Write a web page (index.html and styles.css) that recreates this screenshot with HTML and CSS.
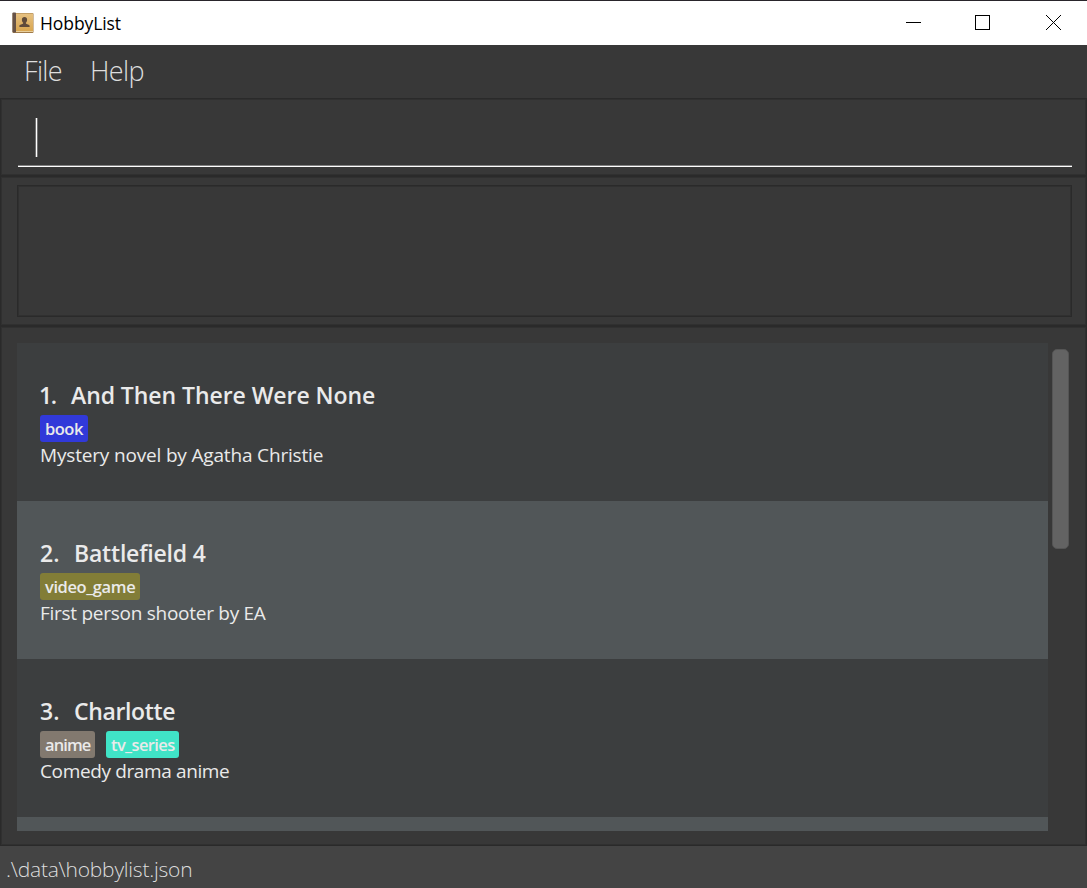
FILE: index.html
```html
<!DOCTYPE html>
<html lang="en">
<head>
<meta charset="utf-8">
<title>HobbyList</title>
<link rel="stylesheet" href="styles.css">
</head>
<body>
<div class="window">
  <header class="titlebar">
    <svg class="app-icon" width="22" height="22" viewBox="0 0 22 22">
      <defs>
        <linearGradient id="cover" x1="0" y1="0" x2="0" y2="1">
          <stop offset="0" stop-color="#e6c182"/>
          <stop offset="1" stop-color="#d9a650"/>
        </linearGradient>
      </defs>
      <rect x="0.5" y="1" width="21" height="20" rx="1" fill="#a07a48"/>
      <rect x="4" y="1.5" width="17" height="17.5" fill="url(#cover)"/>
      <rect x="0.5" y="0.5" width="3.5" height="20" rx="0.8" fill="#665247"/>
      <rect x="4" y="19" width="17" height="1" fill="#e8cf9c"/>
      <path d="M12.5 5c1.7 0 2.6 1.1 2.6 2.7 0 1.3-.5 2.3-1.2 2.9v1c.5.7 3.7 1 3.7 2.3V15H7.400v-1.100c0-1.300 3.200-1.600 3.700-2.300v-1c-.7-.6-1.200-1.600-1.200-2.900C9.900 6.100 10.800 5 12.500 5z" fill="#5f4a3a"/>
    </svg>
    <span class="app-title">HobbyList</span>
    <svg class="controls" width="157" height="16" viewBox="0 0 157 16" fill="none" stroke="#000" shape-rendering="crispEdges">
      <path d="M0 7.500h15"/>
      <rect x="69.500" y="0.500" width="14" height="14"/>
      <path d="M140 0l15 15M155 0l-15 15" shape-rendering="auto"/>
    </svg>
  </header>
  <nav class="menubar"><span class="menu file">File</span><span class="menu help">Help</span></nav>
  <section class="panel command"><div class="field"><span class="caret"></span></div></section>
  <section class="panel result"><div class="result-box"></div></section>
  <main class="panel content">
    <div class="list">
      <article class="card">
        <h2 class="name"><span class="index first">1.</span><span class="n1">And Then There Were None</span></h2>
        <div class="tags"><span class="tag book">book</span></div>
        <p class="desc d1">Mystery novel by Agatha Christie</p>
      </article>
      <article class="card alt">
        <h2 class="name"><span class="index">2.</span><span class="n2">Battlefield 4</span></h2>
        <div class="tags"><span class="tag game">video_game</span></div>
        <p class="desc d2">First person shooter by EA</p>
      </article>
      <article class="card">
        <h2 class="name"><span class="index">3.</span><span class="n3">Charlotte</span></h2>
        <div class="tags"><span class="tag anime">anime</span><span class="tag series">tv_series</span></div>
        <p class="desc d3">Comedy drama anime</p>
      </article>
      <article class="card alt"></article>
    </div>
    <div class="scrollbar"><div class="thumb"></div></div>
  </main>
  <footer class="status"><span class="path">.\data\hobbylist.json</span></footer>
</div>
</body>
</html>
```
FILE: styles.css
```css
* { box-sizing: border-box; }
body { margin: 0; font-family: "Open Sans", "Noto Sans", sans-serif; }
.window { width: 1087px; height: 888px; display: flex; flex-direction: column; background: #383838; overflow: hidden; }
.titlebar { height: 45px; flex: none; border-top: 1px solid #29252b; background: #fff; display: flex; align-items: center; padding: 0 24px 0 12px; }
.app-icon { flex: none; margin-top: -1px; }
.app-title { margin-left: 6px; font-size: 17.500px; line-height: 24px; color: #000; letter-spacing: -0.080px; }
.controls { margin-left: auto; }
.menubar { height: 53px; flex: none; display: flex; padding-left: 24px; color: #dedede; font-size: 27px; line-height: 52px; font-weight: 300; }
.menu { white-space: nowrap; letter-spacing: -0.650px; }
.file { width: 66px; }
.panel { flex: none; border: 1px solid #2a2a2a; box-shadow: inset 0 0 0 1px #303030; }
.command { height: 78px; padding: 18px 14px 0 17px; }
.field { height: 50px; border-bottom: 1px solid #fff; box-shadow: inset 0 -1px #808080; padding: 1px 0 0 17px; }
.caret { display: block; width: 3px; height: 39px; background: #fff; border: solid #727272; border-width: 0 1px; }
.result { height: 150px; padding: 8px 14px 8px 16px; }
.result-box { height: 132px; border: 1px solid #2a2a2a; box-shadow: inset 0 0 0 1px #303030; }
.content { height: 520px; padding: 16px 17px 14px 16px; display: flex; gap: 4px; }
.list { width: 1031px; height: 488px; overflow: hidden; }
.card { height: 158px; background: #3c3e3f; padding: 36px 23px 0; color: #eaeaea; }
.alt { background: #515658; }
.name { margin: 0; font-size: 23px; line-height: 32px; height: 36px; font-weight: 600; display: flex; white-space: nowrap; }
.index { width: 34px; }
.first { width: 31px; letter-spacing: -1.500px; text-indent: -1px; }
.n1 { letter-spacing: -0.060px; }
.n2 { letter-spacing: -0.200px; }
.n3 { letter-spacing: -0.350px; }
.tags { display: flex; gap: 11px; height: 27px; }
.tag { height: 27px; border-radius: 3px; padding-left: 5px; font-size: 16.500px; line-height: 28px; font-weight: 600; letter-spacing: -0.500px; white-space: nowrap; }
.book { width: 48px; background: #3139d9; }
.game { width: 100px; background: #827d37; letter-spacing: -0.400px; }
.anime { width: 55px; background: #82796f; letter-spacing: -0.900px; }
.series { width: 73px; background: #40e4c7; letter-spacing: -0.620px; }
.desc { margin: 0; font-size: 19px; line-height: 26px; white-space: nowrap; }
.d1 { letter-spacing: -0.170px; }
.d2 { letter-spacing: -0.270px; }
.d3 { letter-spacing: -0.370px; }
.scrollbar { width: 17px; padding-top: 6px; }
.thumb { height: 200px; border-radius: 5px; border: 1px solid #555; background: #636363; }
.status { height: 42px; flex: none; background: #444; padding-left: 6px; font-size: 21px; line-height: 47px; font-weight: 300; color: #dedede; letter-spacing: -0.220px; }
```
